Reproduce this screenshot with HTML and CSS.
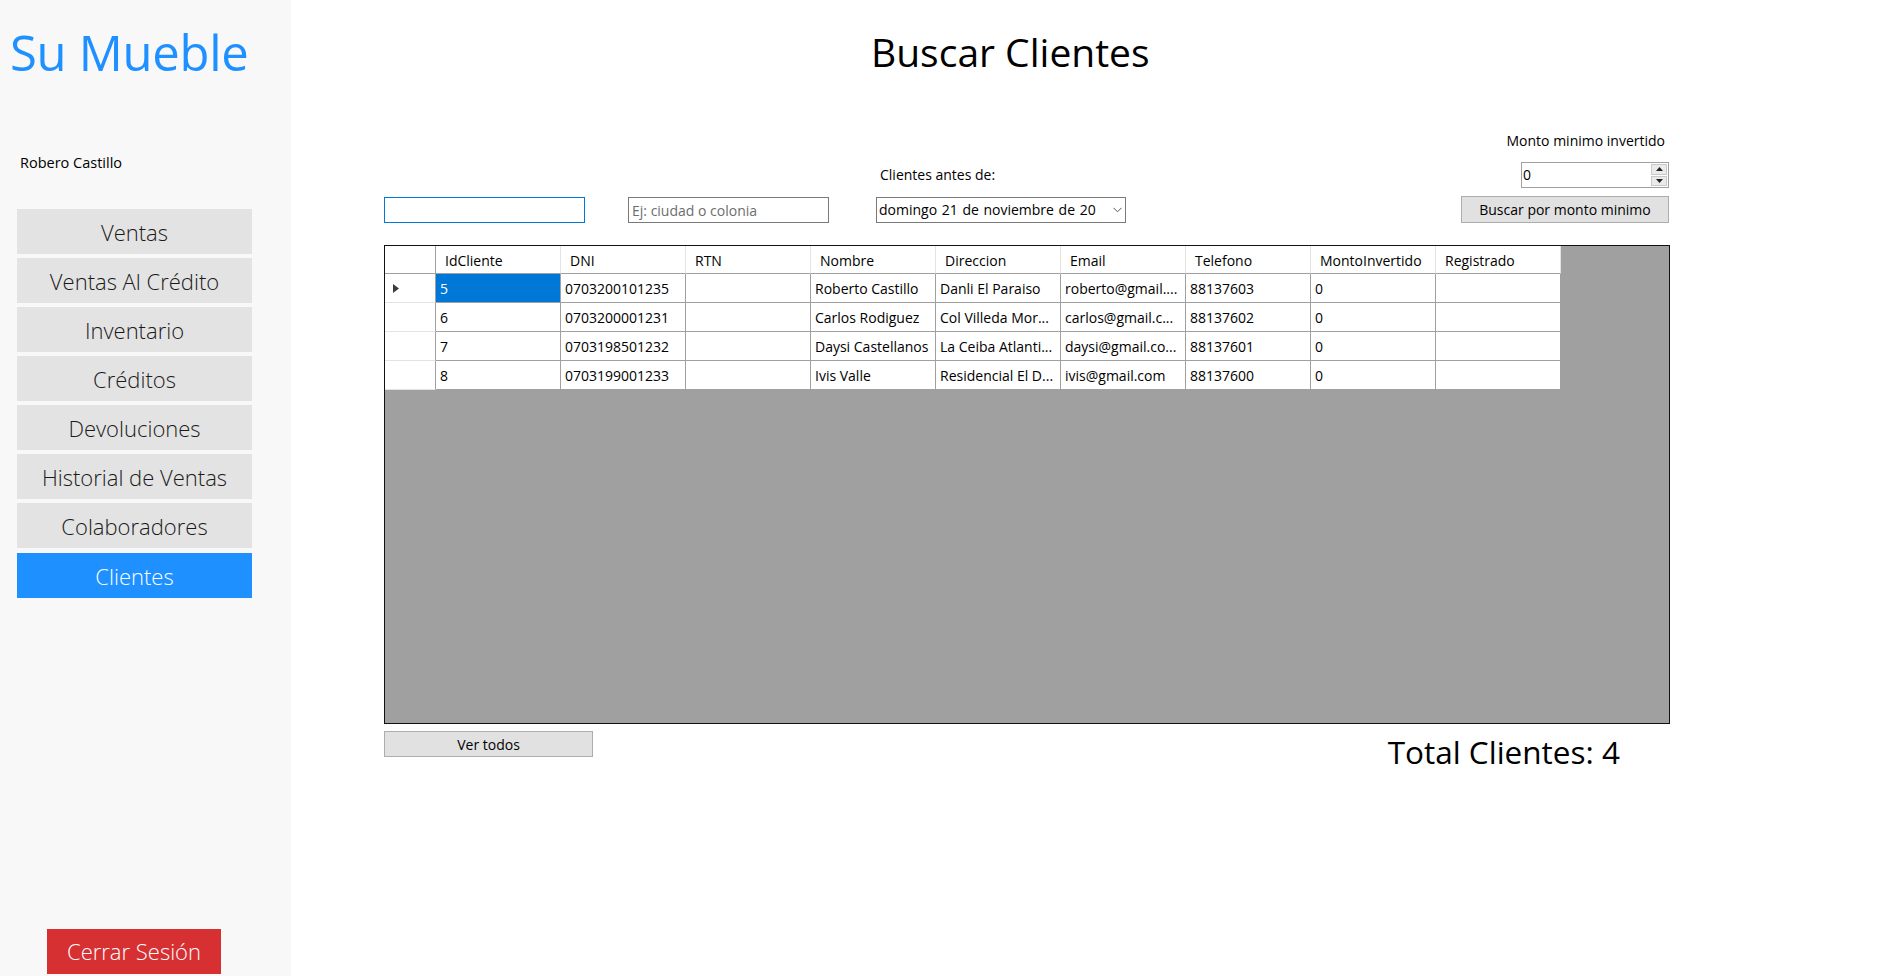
FILE: index.html
```html
<!DOCTYPE html>
<html lang="es">
<head>
<meta charset="utf-8">
<title>Buscar Clientes</title>
<link rel="stylesheet" href="styles.css">
</head>
<body>
<div class="app">
  <aside class="sidebar">
    <h1 class="brand">Su Mueble</h1>
    <div class="user">Robero Castillo</div>
    <nav class="nav">
      <button class="nav-btn">Ventas</button>
      <button class="nav-btn">Ventas Al Crédito</button>
      <button class="nav-btn">Inventario</button>
      <button class="nav-btn">Créditos</button>
      <button class="nav-btn">Devoluciones</button>
      <button class="nav-btn">Historial de Ventas</button>
      <button class="nav-btn">Colaboradores</button>
      <button class="nav-btn active">Clientes</button>
    </nav>
    <button class="logout">Cerrar Sesión</button>
  </aside>

  <main class="main">
    <h2 class="title">Buscar Clientes</h2>

    <div class="filters">
      <input class="field focused" type="text">
      <input class="field second" type="text" placeholder="Ej: ciudad o colonia">
      <div class="date-col">
        <label class="lbl date-lbl">Clientes antes de:</label>
        <div class="datepicker">
          <span class="date-text">domingo 21 de noviembre de 20</span>
          <svg class="chev" width="9" height="6" viewBox="0 0 9 6"><path d="M0.5 0.8 L4.5 4.8 L8.5 0.8" fill="none" stroke="#555" stroke-width="1"/></svg>
        </div>
      </div>
      <div class="amount-col">
        <label class="lbl amount-lbl">Monto minimo invertido</label>
        <div class="numeric">
          <span class="num-val">0</span>
          <div class="spin">
            <span class="spin-btn"><svg width="7" height="4" viewBox="0 0 7 4"><path d="M3.5 0 L7 4 L0 4 Z" fill="#222"/></svg></span>
            <span class="spin-btn"><svg width="7" height="4" viewBox="0 0 7 4"><path d="M0 0 L7 0 L3.5 4 Z" fill="#222"/></svg></span>
          </div>
        </div>
        <button class="btn btn-search">Buscar por monto minimo</button>
      </div>
    </div>

    <div class="grid-view">
      <div class="dgv">
        <div class="hc rh-head"></div>
        <div class="hc">IdCliente</div>
        <div class="hc">DNI</div>
        <div class="hc">RTN</div>
        <div class="hc">Nombre</div>
        <div class="hc">Direccion</div>
        <div class="hc">Email</div>
        <div class="hc">Telefono</div>
        <div class="hc">MontoInvertido</div>
        <div class="hc">Registrado</div>

        <div class="rh"><svg width="6" height="9" viewBox="0 0 6 9"><path d="M0 0 L6 4.5 L0 9 Z" fill="#3c3c3c"/></svg></div>
        <div class="c sel">5</div>
        <div class="c">0703200101235</div>
        <div class="c"></div>
        <div class="c">Roberto Castillo</div>
        <div class="c">Danli El Paraiso</div>
        <div class="c">roberto@gmail....</div>
        <div class="c">88137603</div>
        <div class="c">0</div>
        <div class="c"></div>

        <div class="rh"></div>
        <div class="c">6</div>
        <div class="c">0703200001231</div>
        <div class="c"></div>
        <div class="c">Carlos Rodiguez</div>
        <div class="c">Col Villeda Mor...</div>
        <div class="c">carlos@gmail.c...</div>
        <div class="c">88137602</div>
        <div class="c">0</div>
        <div class="c"></div>

        <div class="rh"></div>
        <div class="c">7</div>
        <div class="c">0703198501232</div>
        <div class="c"></div>
        <div class="c">Daysi Castellanos</div>
        <div class="c">La Ceiba Atlanti...</div>
        <div class="c">daysi@gmail.co...</div>
        <div class="c">88137601</div>
        <div class="c">0</div>
        <div class="c"></div>

        <div class="rh"></div>
        <div class="c">8</div>
        <div class="c">0703199001233</div>
        <div class="c"></div>
        <div class="c">Ivis Valle</div>
        <div class="c">Residencial El D...</div>
        <div class="c">ivis@gmail.com</div>
        <div class="c">88137600</div>
        <div class="c">0</div>
        <div class="c"></div>
      </div>
    </div>

    <div class="footer-row">
      <button class="btn btn-all">Ver todos</button>
      <div class="total">Total Clientes: 4</div>
    </div>
  </main>
</div>
</body>
</html>
```

FILE: styles.css
```css
* { box-sizing: border-box; }

html, body {
  margin: 0;
  padding: 0;
  background: #ffffff;
}

body {
  font-family: "Open Sans", "Noto Sans", sans-serif;
  color: #000;
}

.app {
  display: flex;
  width: 1881px;
  height: 976px;
  overflow: hidden;
}

/* ---------- Sidebar ---------- */
.sidebar {
  width: 291px;
  flex: none;
  background: #f8f8f8;
  display: flex;
  flex-direction: column;
  height: 976px;
}

.brand {
  margin: 22px 0 0 0;
  padding-left: 10px;
  font-size: 49px;
  line-height: 60px;
  font-weight: 400;
  color: #1e90ff;
  letter-spacing: -0.3px;
}

.user {
  margin-top: 71px;
  padding-left: 20px;
  font-size: 14.5px;
  line-height: 20px;
  color: #000;
}

.nav {
  margin-top: 36px;
  margin-left: 17px;
  width: 235px;
  display: flex;
  flex-direction: column;
  gap: 4px;
}

.nav-btn {
  height: 45px;
  border: none;
  background: #e3e3e3;
  font-family: "Open Sans", "Noto Sans", sans-serif;
  font-weight: 300;
  font-size: 22px;
  line-height: 43px;
  padding: 2px 0 0 0;
  color: #1a1a1a;
  text-align: center;
}

.nav-btn.active {
  margin-top: 1px;
  background: #1e90ff;
  color: #ffffff;
}

.logout {
  margin: auto 0 2px 47px;
  width: 174px;
  height: 45px;
  border: none;
  background: #d63032;
  color: #ffffff;
  font-family: "Open Sans", "Noto Sans", sans-serif;
  font-weight: 300;
  font-size: 22px;
  line-height: 45px;
  padding: 0;
}

/* ---------- Main ---------- */
.main {
  flex: 1;
  padding: 25px 0 0 93px;
}

.main > * {
  width: 1286px;
}

.title {
  margin: 0;
  padding-left: 487px;
  font-size: 39px;
  line-height: 54px;
  font-weight: 400;
  color: #000;
}

.filters {
  margin-top: 52px;
  display: flex;
  align-items: flex-end;
}

.field {
  width: 201px;
  height: 26px;
  border: 1px solid #7a7a7a;
  padding: 0 3px;
  font-family: "Open Sans", "Noto Sans", sans-serif;
  font-size: 14px;
  background: #fff;
  outline: none;
}

.field.focused {
  border-color: #0078d7;
}

.field.second {
  margin-left: 43px;
}

.field::placeholder {
  color: #6d6d6d;
}

.lbl {
  display: block;
  font-size: 14px;
  line-height: 20px;
  color: #000;
}

.date-col {
  margin-left: 47px;
  display: flex;
  flex-direction: column;
}

.date-lbl {
  padding-left: 4px;
  margin-bottom: 12px;
}

.datepicker {
  width: 250px;
  height: 26px;
  border: 1px solid #7a7a7a;
  background: #fff;
  display: flex;
  align-items: center;
  padding-left: 2px;
}

.date-text {
  width: 226px;
  white-space: nowrap;
  font-size: 14px;
  line-height: 24px;
  word-spacing: 1px;
}

.chev {
  margin-left: 8px;
}

.amount-col {
  margin-left: auto;
  margin-right: 1px;
  display: flex;
  flex-direction: column;
  align-items: flex-end;
}

.amount-lbl {
  padding-right: 4px;
}

.numeric {
  margin-top: 11px;
  width: 148px;
  height: 26px;
  border: 1px solid #a0a0a0;
  background: #fff;
  display: flex;
  align-items: stretch;
}

.num-val {
  flex: 1;
  font-size: 14px;
  line-height: 24px;
  padding-left: 1px;
}

.spin {
  width: 17px;
  display: flex;
  flex-direction: column;
  padding: 1px 1px 1px 0;
  gap: 1px;
}

.spin-btn {
  flex: 1;
  background: #eaeaea;
  border: 1px solid #c9c9c9;
  display: flex;
  align-items: center;
  justify-content: center;
}

.btn {
  height: 27px;
  border: 1px solid #adadad;
  background: #e1e1e1;
  font-family: "Open Sans", "Noto Sans", sans-serif;
  font-size: 14px;
  color: #000;
  padding: 0;
  text-align: center;
}

.btn-search {
  margin-top: 8px;
  width: 208px;
}

/* ---------- Grid ---------- */
.grid-view {
  margin-top: 22px;
  height: 479px;
  border: 1px solid #111;
  background: #a0a0a0;
}

.dgv {
  display: grid;
  grid-template-columns: 51px repeat(9, 125px);
  grid-template-rows: 28px repeat(4, 29px);
  width: 1176px;
  font-size: 14px;
}

.hc {
  background: #fff;
  border-right: 1px solid #e3e3e3;
  border-bottom: 1px solid #a0a0a0;
  padding: 2px 0 0 9px;
  line-height: 25px;
  white-space: nowrap;
  overflow: hidden;
}

.hc.rh-head {
  border-right-color: #a0a0a0;
}

.rh {
  background: #fff;
  border-right: 1px solid #a0a0a0;
  border-bottom: 1px solid #e3e3e3;
  display: flex;
  align-items: center;
  padding-left: 8px;
}

.c {
  background: #fff;
  border-right: 1px solid #a0a0a0;
  border-bottom: 1px solid #a0a0a0;
  padding: 1px 0 0 4px;
  line-height: 27px;
  white-space: nowrap;
  overflow: hidden;
}

.c.sel {
  background: #0078d7;
  color: #fff;
}

/* ---------- Footer ---------- */
.footer-row {
  margin-top: 7px;
  display: flex;
  align-items: flex-start;
  justify-content: space-between;
}

.btn-all {
  width: 209px;
  height: 26px;
}

.total {
  margin-top: 1px;
  margin-right: 50px;
  font-size: 31.5px;
  line-height: 40px;
  color: #000;
}
```
